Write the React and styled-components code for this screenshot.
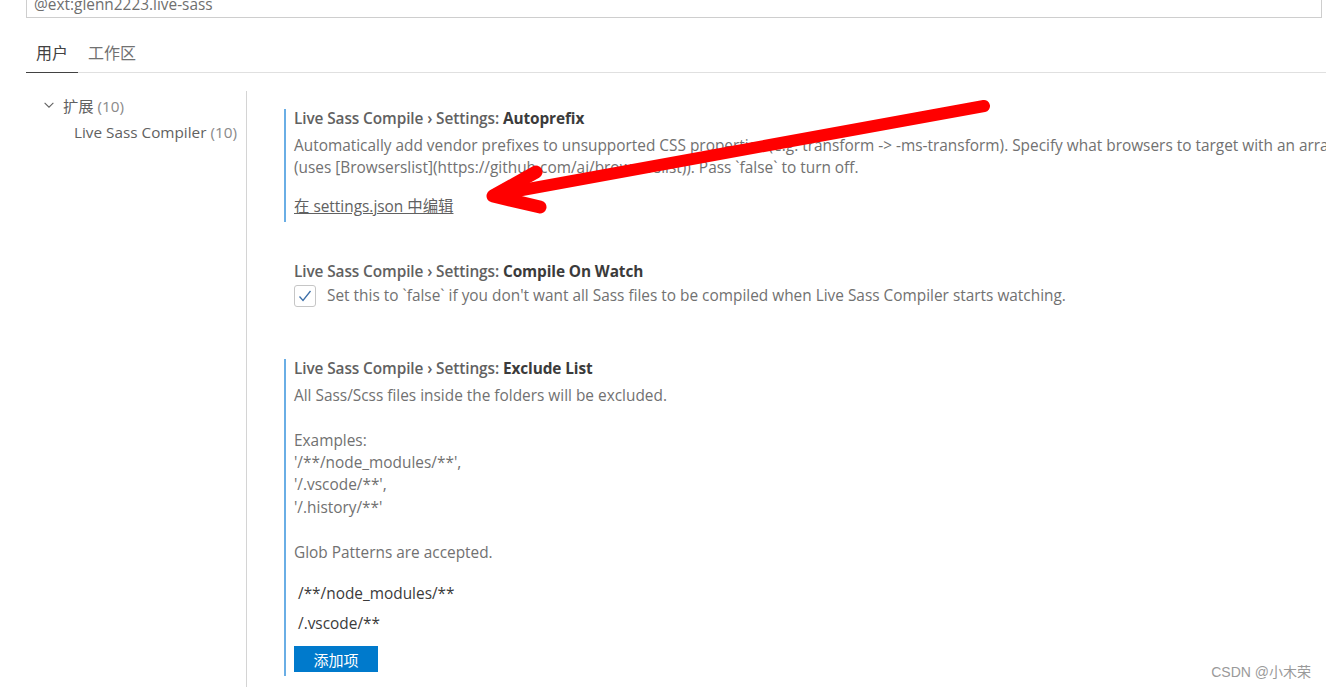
import React from "react";
import styled, { createGlobalStyle } from "styled-components";

const Global = createGlobalStyle`
  html, body { margin: 0; padding: 0; background: #ffffff; }
  body {
    width: 1326px; height: 687px; overflow: hidden; position: relative;
    font-family: "Open Sans", "Noto Sans CJK SC", sans-serif;
    font-size: 15.4px; color: #616161;
  }
`;

const Page = styled.div`
  display: flex;
  flex-direction: column;
  height: 687px;
`;

const SearchBox = styled.div`
  margin: -9px 4px 0 26px;
  height: 27px;
  border: 1px solid #cecece;
  padding: 0 7px;
  display: flex;
  align-items: center;
  color: #6f6f6f;
  font-size: 15.4px;
  box-sizing: border-box;
`;

const Tabs = styled.div`
  margin: 24px 0 0 26px;
  display: flex;
  border-bottom: 1px solid #e0e0e0;
`;

const Tab = styled.div`
  padding: 0 10px;
  height: 30px;
  line-height: 22px;
  font-size: 16px;
  color: ${p => (p.$active ? "#424242" : "#717171")};
  margin-bottom: -1px;
  border-bottom: 1px solid ${p => (p.$active ? "#424242" : "transparent")};
`;

const Main = styled.div`
  flex: 1;
  display: flex;
  margin-top: 18px;
  min-height: 0;
`;

const Tree = styled.div`
  width: 246px;
  border-right: 1px solid #d4d4d4;
  display: flex;
  flex-direction: column;
  flex-shrink: 0;
`;

const TreeRow = styled.div`
  height: 27px;
  display: flex;
  align-items: center;
  padding-left: ${p => p.$indent}px;
  gap: 7px;
  font-size: 15.3px;
  color: #616161;
  white-space: nowrap;
`;

const Count = styled.span`
  color: #8a8a8a;
`;

const Content = styled.div`
  flex: 1;
  overflow: hidden;
  padding: 18px 0 0 37px;
  display: flex;
  flex-direction: column;
  gap: 40px;
`;

const Item = styled.div`
  border-left: 2px solid ${p => (p.$modified ? "#6aaee5" : "transparent")};
  padding: 0 0 ${p => p.$pb || 4}px 8px;
  display: flex;
  flex-direction: column;
`;

const Title = styled.div`
  line-height: 20px;
  font-size: 15.4px;
  font-weight: 600;
  color: #616161;
  white-space: nowrap;
  letter-spacing: -0.1px;
`;

const Key = styled.span`
  color: #3b3b3b;
  font-weight: 700;
`;

const Desc = styled.div`
  margin-top: 6px;
  line-height: 22.4px;
  font-size: 15.4px;
  color: #717171;
  white-space: pre;
`;

const Link = styled.a`
  margin-top: 16px;
  line-height: 22px;
  font-size: 15.4px;
  color: #616161;
  text-decoration: underline;
  align-self: flex-start;
`;

const CheckRow = styled.div`
  margin-top: 3px;
  display: flex;
  align-items: center;
  gap: 11px;
  height: 22px;
  font-size: 15.4px;
  color: #717171;
  white-space: nowrap;
`;

const Check = styled.div`
  width: 22px;
  height: 22px;
  box-sizing: border-box;
  border: 1px solid #c6c6c6;
  border-radius: 3px;
  display: flex;
  align-items: center;
  justify-content: center;
`;

const ListRow = styled.div`
  height: 30px;
  display: flex;
  align-items: center;
  padding-left: 4px;
  font-size: 15.4px;
  color: #3b3b3b;
`;

const List = styled.div`
  margin-top: 14px;
  display: flex;
  flex-direction: column;
`;

const AddButton = styled.button`
  margin-top: 8px;
  align-self: flex-start;
  width: 84px;
  height: 26px;
  border: none;
  background: #007acc;
  color: #ffffff;
  font-family: "Noto Sans CJK SC", sans-serif;
  font-size: 15px;
  padding: 0;
`;

const Overlay = styled.svg`
  position: absolute;
  left: 0;
  top: 0;
  pointer-events: none;
`;

const Watermark = styled.div`
  position: absolute;
  right: 15px;
  top: 661px;
  font-family: "Liberation Sans", "Noto Sans CJK SC", sans-serif;
  font-size: 14px;
  color: #9a9a9a;
`;

export default function App() {
  return (
    <>
      <Global />
      <Page>
        <SearchBox>@ext:glenn2223.live-sass</SearchBox>
        <Tabs>
          <Tab $active>用户</Tab>
          <Tab>工作区</Tab>
        </Tabs>
        <Main>
          <Tree>
            <TreeRow $indent={42}>
              <svg width="14" height="14" viewBox="0 0 16 16">
                <path d="M3 5.5 L8 10.5 L13 5.5" fill="none" stroke="#616161" strokeWidth="1.2" />
              </svg>
              <span>扩展 <Count>(10)</Count></span>
            </TreeRow>
            <TreeRow $indent={74}>
              <span>Live Sass Compiler <Count>(10)</Count></span>
            </TreeRow>
          </Tree>
          <Content>
            <Item $modified>
              <Title>Live Sass Compile › Settings: <Key>Autoprefix</Key></Title>
              <Desc>{"Automatically add vendor prefixes to unsupported CSS properties (e.g. transform -> -ms-transform). Specify what browsers to target with an array of strings\n(uses [Browserslist](https://github.com/ai/browserslist)). Pass `false` to turn off."}</Desc>
              <Link>在 settings.json 中编辑</Link>
            </Item>
            <Item $pb={12}>
              <Title>Live Sass Compile › Settings: <Key>Compile On Watch</Key></Title>
              <CheckRow>
                <Check>
                  <svg width="16" height="16" viewBox="0 0 16 16">
                    <path d="M2.5 8.5 L6 12.5 L13.5 3" fill="none" stroke="#3d6fa8" strokeWidth="1.3" />
                  </svg>
                </Check>
                <span>Set this to `false` if you don't want all Sass files to be compiled when Live Sass Compiler starts watching.</span>
              </CheckRow>
            </Item>
            <Item $modified>
              <Title>Live Sass Compile › Settings: <Key>Exclude List</Key></Title>
              <Desc>{"All Sass/Scss files inside the folders will be excluded.\n\nExamples:\n'/**/node_modules/**',\n'/.vscode/**',\n'/.history/**'\n\nGlob Patterns are accepted."}</Desc>
              <List>
                <ListRow>/**/node_modules/**</ListRow>
                <ListRow>/.vscode/**</ListRow>
              </List>
              <AddButton>添加项</AddButton>
            </Item>
          </Content>
        </Main>
      </Page>
      <Overlay width="1326" height="687">
        <g fill="none" stroke="#ff0000" strokeLinecap="round" strokeLinejoin="round">
          <path d="M984 106 L500 194" strokeWidth="12" />
          <path d="M536 172 L493 196 L540 207" strokeWidth="13" />
        </g>
      </Overlay>
      <Watermark>CSDN @小木荣</Watermark>
    </>
  );
}
